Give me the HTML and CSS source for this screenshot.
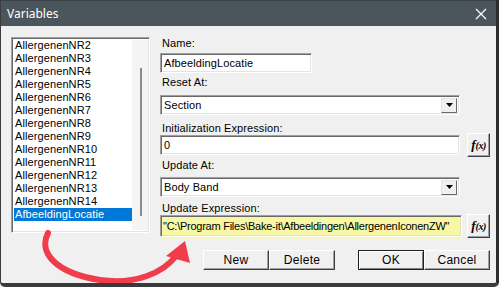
FILE: index.html
```html
<!DOCTYPE html>
<html>
<head>
<meta charset="utf-8">
<link rel="stylesheet" href="styles.css">
</head>
<body>
<div class="window">
  <div class="titlebar">
    <span class="title">Variables</span>
    <svg class="close" width="12" height="12" viewBox="0 0 12 12"><path d="M1 1 L11 11 M11 1 L1 11" stroke="#fff" stroke-width="1.2" fill="none"/></svg>
  </div>
  <div class="client">
    <div class="listbox">
      <div class="items">
        <div class="item">AllergenenNR2</div>
        <div class="item">AllergenenNR3</div>
        <div class="item">AllergenenNR4</div>
        <div class="item">AllergenenNR5</div>
        <div class="item">AllergenenNR6</div>
        <div class="item">AllergenenNR7</div>
        <div class="item">AllergenenNR8</div>
        <div class="item">AllergenenNR9</div>
        <div class="item">AllergenenNR10</div>
        <div class="item">AllergenenNR11</div>
        <div class="item">AllergenenNR12</div>
        <div class="item">AllergenenNR13</div>
        <div class="item">AllergenenNR14</div>
        <div class="item selected">AfbeeldingLocatie</div>
      </div>
      <div class="scroll"><div class="thumb"></div></div>
    </div>
    <div class="form">
      <div class="label l-name">Name:</div>
      <div class="field name">AfbeeldingLocatie</div>
      <div class="label l-reset">Reset At:</div>
      <div class="field select">Section<span class="drop"><svg width="7" height="4" viewBox="0 0 7 4"><path d="M0 0 H7 L3.5 4 Z" fill="#000"/></svg></span></div>
      <div class="label l-init">Initialization Expression:</div>
      <div class="row r-init">
        <div class="field init">0</div>
        <div class="btn fx"><i>f</i><span class="fxs">(x)</span></div>
      </div>
      <div class="label l-upat">Update At:</div>
      <div class="field select s2">Body Band<span class="drop"><svg width="7" height="4" viewBox="0 0 7 4"><path d="M0 0 H7 L3.5 4 Z" fill="#000"/></svg></span></div>
      <div class="label l-upex">Update Expression:</div>
      <div class="row r-upex">
        <div class="field upex">"C:\Program Files\Bake-it\Afbeeldingen\AllergenenIconenZW"</div>
        <div class="btn fx fx2"><i>f</i><span class="fxs">(x)</span></div>
      </div>
      <div class="buttons">
        <div class="btn push">New</div>
        <div class="btn push">Delete</div>
        <div class="btn push ok">OK</div>
        <div class="btn push">Cancel</div>
      </div>
    </div>
  </div>
  <svg class="arrow" width="499" height="287" viewBox="0 0 499 287">
    <path d="M48 233 C38 252, 55 273, 100 280 C135 285, 163 273, 176 256" stroke="#f03c4b" stroke-width="6" fill="none" stroke-linecap="round"/>
    <path d="M185 241 L166 256 L190 263 Z" fill="#f03c4b"/>
  </svg>
</div>
</body>
</html>
```
FILE: styles.css
```css
html, body {
  margin: 0;
  padding: 0;
  background: #f0f0f0;
}
.window {
  position: relative;
  width: 499px;
  height: 287px;
  box-sizing: border-box;
  background: #f0f0f0;
  border-left: 1px solid #3c3c3c;
  border-right: 3px solid #2e2e2e;
  border-bottom: 4px solid #3a3a3a;
  border-bottom-left-radius: 5px;
  border-bottom-right-radius: 5px;
  overflow: hidden;
  font-family: "Liberation Sans", Arial, sans-serif;
  font-size: 11px;
  color: #000;
}
.titlebar {
  height: 26px;
  background: #4b555c;
  display: flex;
  align-items: center;
  justify-content: space-between;
  padding: 0 9px 0 6px;
  border-top: 1px solid #3a4247;
  box-sizing: border-box;
}
.title {
  color: #fff;
  font-family: "Noto Sans", "Open Sans", sans-serif;
  font-size: 12px;
}
.close {
  margin-top: 1px;
}
.client {
  display: flex;
  padding: 11px 0 0 10px;
  gap: 10px;
}
.listbox {
  width: 139px;
  height: 196px;
  box-sizing: border-box;
  background: #fff;
  border-top: 1px solid #a0a0a0;
  border-left: 1px solid #a0a0a0;
  border-right: 1px solid #fff;
  border-bottom: 1px solid #fff;
  box-shadow: inset 1px 1px 0 #696969, inset -1px -1px 0 #e3e3e3;
  display: flex;
}
.items {
  flex: 1;
  padding: 1px 0 0 2px;
}
.item {
  height: 13px;
  line-height: 13px;
  padding-left: 1px;
  width: 117px;
  letter-spacing: 0.1px;
  white-space: nowrap;
}
.item.selected {
  background: #0078d7;
  color: #fff;
}
.scroll {
  width: 16px;
  background: #f4f4f4;
  margin: 2px 1px 2px 0;
  position: relative;
}
.thumb {
  position: absolute;
  left: 8px;
  top: 28px;
  width: 2px;
  height: 148px;
  background: #8a8a8a;
}
.form {
  width: 330px;
  display: flex;
  flex-direction: column;
}
.label {
  height: 13px;
  line-height: 13px;
  padding-left: 2px;
  letter-spacing: 0.1px;
}
.l-name { margin-top: 0; }
.l-reset { margin-top: 3px; }
.l-init { margin-top: 7px; }
.l-upat { margin-top: 2px; }
.l-upex { margin-top: 5px; }
.field {
  box-sizing: border-box;
  background: #fff;
  border-top: 1px solid #a0a0a0;
  border-left: 1px solid #a0a0a0;
  border-right: 1px solid #fff;
  border-bottom: 1px solid #fff;
  box-shadow: inset 1px 1px 0 #696969, inset -1px -1px 0 #e3e3e3;
  padding-left: 3px;
  display: flex;
  align-items: center;
  white-space: nowrap;
  overflow: hidden;
  letter-spacing: 0.1px;
}
.name {
  width: 152px;
  height: 20px;
  margin-top: 3px;
}
.select {
  width: 300px;
  height: 20px;
  margin-top: 6px;
  justify-content: space-between;
  padding-right: 2px;
}
.select.s2 {
  margin-top: 5px;
}
.drop {
  width: 16px;
  height: 15px;
  box-sizing: border-box;
  background: #f0f0f0;
  border-top: 1px solid #e3e3e3;
  border-left: 1px solid #e3e3e3;
  border-right: 1px solid #696969;
  border-bottom: 1px solid #696969;
  display: flex;
  align-items: center;
  justify-content: center;
}
.row {
  display: flex;
  align-items: center;
  gap: 7px;
}
.r-init {
  margin-top: -2px;
}
.r-upex {
  margin-top: -1px;
  gap: 5px;
}
.init {
  width: 300px;
  height: 20px;
}
.upex {
  width: 302px;
  height: 22px;
  padding-left: 2px;
  letter-spacing: -0.25px;
  background: #f7f7a6;
  box-shadow: inset 1px 1px 0 #696969, inset -1px -1px 0 #e3e3b0, 0 2px 0 #f4f4c4;
}
.btn {
  box-sizing: border-box;
  background: #f0f0f0;
  border-top: 1px solid #fff;
  border-left: 1px solid #fff;
  border-right: 1px solid #404040;
  border-bottom: 1px solid #404040;
  box-shadow: inset -1px -1px 0 #a0a0a0;
  display: flex;
  align-items: center;
  justify-content: center;
}
.fx {
  width: 23px;
  height: 24px;
  flex-shrink: 0;
  font-family: "Liberation Serif", "Times New Roman", serif;
  font-weight: bold;
  font-size: 13px;
}
.fx i {
  font-style: italic;
}
.fxs {
  font-size: 10px;
  font-style: italic;
  letter-spacing: -0.5px;
}
.buttons {
  display: flex;
  margin-top: 12px;
  margin-left: 43px;
}
.push {
  width: 66px;
  height: 20px;
  font-size: 12px;
  letter-spacing: 0.3px;
}
.push.ok {
  margin-left: 23px;
  border: 1px solid #202020;
  box-shadow: inset 1px 1px 0 #fff, inset -1px -1px 0 #808080;
}
.arrow {
  position: absolute;
  left: -1px;
  top: 0;
  pointer-events: none;
}
```
